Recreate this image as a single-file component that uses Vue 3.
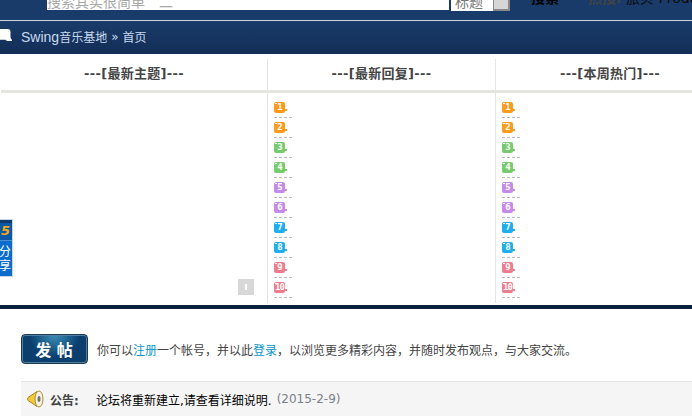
<script setup>
const tints = ['orange', 'orange', 'green', 'green', 'purple', 'purple', 'blue', 'blue', 'red', 'red']
const columns = [
  { title: '最新主题', ranks: [] },
  { title: '最新回复', ranks: tints },
  { title: '本周热门', ranks: tints }
]
</script>

<template>
  <div class="page">
    <header class="top">
      <div class="search-input"><span>搜索其实很简单　二</span></div>
      <div class="search-type"><span>标题</span></div>
      <div class="search-btn"></div>
      <div class="search-label"><span>搜索</span></div>
      <div class="hot"><span><b>热搜:</b> 旅贝 Produ</span></div>
    </header>

    <nav class="crumb">
      <svg class="crumb-icon" width="12" height="13" viewBox="0 0 12 13">
        <path d="M0 0h7.5q3 0 3 3v5q0 1.5 1.5 3v1h-5l-1.5-1.2H0z" fill="#fff" />
      </svg>
      <span class="crumb-latin">Swing</span><span>音乐基地</span>
      <span class="crumb-sep">»</span>
      <span>首页</span>
    </nav>

    <section class="board">
      <div class="panels">
        <div v-for="(col, i) in columns" :key="col.title" class="panel">
          <h3 class="panel-title">---[{{ col.title }}]---</h3>
          <ol class="rank-list">
            <li v-for="(tint, n) in col.ranks" :key="n" class="rank-row">
              <span class="badge" :class="tint">{{ n + 1 }}</span>
            </li>
          </ol>
          <div v-if="i === 0" class="toggle"><i></i></div>
        </div>
      </div>
    </section>

    <div class="divider"></div>

    <div class="post-row">
      <button class="post-btn">发 帖</button>
      <p class="post-hint">你可以<a>注册</a>一个帐号，并以此<a>登录</a>，以浏览更多精彩内容，并随时发布观点，与大家交流。</p>
    </div>

    <div class="notice">
      <svg class="horn" width="17" height="18" viewBox="0 0 17 18">
        <path d="M1 7.5 L10 1.5 L10 16.5 L1 10.5 Q0 9 1 7.5z" fill="#f3c93c" stroke="#a9862a" stroke-width="1" />
        <ellipse cx="12" cy="9" rx="4" ry="8" fill="#f4f1e4" stroke="#b08f35" stroke-width="1" />
        <ellipse cx="12" cy="9" rx="1.5" ry="3" fill="#77746a" />
      </svg>
      <strong class="notice-label">公告:</strong>
      <span class="notice-text">论坛将重新建立,请查看详细说明.</span>
      <span class="notice-date">(2015-2-9)</span>
    </div>

    <aside class="share">
      <div class="share-logo">5</div>
      <div class="share-text">分<br />享</div>
    </aside>
  </div>
</template>

<style>
html, body { margin: 0; overflow: hidden; background: #fff; }
</style>

<style scoped>
.page {
  position: relative;
  width: 692px;
  height: 416px;
  overflow: hidden;
  background: #fff;
  font-family: "DejaVu Sans", "Noto Sans CJK SC", sans-serif;
  font-size: 12px;
  color: #444;
}
.top {
  display: flex;
  align-items: flex-start;
  height: 20px;
  padding-left: 47px;
  box-sizing: border-box;
  background: #193b69;
}
.top > div { flex: none; }
.search-input {
  width: 402px;
  height: 10px;
  background: #fff;
  overflow: hidden;
  color: #a6a6a6;
  font-size: 14px;
  line-height: 16px;
}
.search-input span { display: block; margin-top: -6px; white-space: nowrap; }
.search-type {
  width: 42px;
  height: 11px;
  margin-left: 2px;
  background: #fff;
  overflow: hidden;
  font-size: 14px;
  line-height: 16px;
  color: #777;
}
.search-type span { display: block; margin: -6px 0 0 4px; }
.search-btn {
  width: 14px;
  height: 9px;
  background: #d6d6d6;
  border: 1px solid #8a8a8a;
  border-width: 0 2px 2px 1px;
}
.search-label {
  width: 57px;
  height: 6px;
  margin-left: 21px;
  overflow: hidden;
  color: #000;
  font-size: 14px;
  font-weight: 700;
  line-height: 16px;
}
.search-label span { display: block; margin-top: -10px; }
.hot {
  height: 6px;
  overflow: hidden;
  color: #0b0b0b;
  font-size: 14px;
  line-height: 16px;
  white-space: nowrap;
}
.hot span { display: block; margin-top: -10px; }
.hot b { color: #444; }
.crumb {
  position: relative;
  display: flex;
  align-items: center;
  height: 34px;
  box-sizing: border-box;
  border-top: 1px solid #ccd4de;
  padding: 0 0 2px 21px;
  background: linear-gradient(#1a3b69, #122e57);
  color: #c9d9ee;
  font-size: 12px;
}
.crumb-icon { position: absolute; left: 0; top: 8px; }
.crumb-latin { font-family: "Liberation Sans", sans-serif; font-size: 14px; }
.crumb-sep { margin: 0 4px; font-size: 12px; }
.board { padding-top: 5px; height: 251px; box-sizing: border-box; }
.panels {
  display: grid;
  grid-template-columns: 268px 228px 228px;
  height: 244px;
}
.panel {
  position: relative;
  box-sizing: border-box;
  border-right: 1px solid #e5e5e0;
}
.panel:last-child { border-right: 0; }
.panel:first-child { padding-left: 1px; }
.panel-title {
  height: 31px;
  margin: 0;
  border-bottom: 3px solid #e5e5e0;
  text-align: center;
  font-size: 13px;
  font-weight: 700;
  line-height: 30px;
  color: #444;
  letter-spacing: 0.3px;
}
.rank-list {
  list-style: none;
  margin: 0;
  padding: 5px 0 0 6px;
}
.rank-row {
  width: 18px;
  height: 20px;
  box-sizing: border-box;
  padding-top: 4px;
  border-bottom: 1px dashed #b9b9c2;
}
.badge {
  position: relative;
  display: block;
  width: 11px;
  height: 11px;
  border-radius: 2px;
  color: #fff;
  font-family: "DejaVu Sans Mono", monospace;
  font-size: 9px;
  font-weight: 700;
  line-height: 11px;
  text-align: center;
  letter-spacing: -1px;
}
.badge::before {
  content: "";
  position: absolute;
  left: 1px;
  top: 1px;
  width: 2px;
  height: 1px;
  background: #fff;
}
.badge::after {
  content: "";
  position: absolute;
  left: 11px;
  top: 7px;
  width: 2px;
  height: 2px;
  background: inherit;
}
.orange { background: #ff9b1c; }
.green { background: #77cb6c; }
.purple { background: #c68ae8; }
.blue { background: #20aeee; }
.red { background: #ee7c8c; }
.toggle {
  position: absolute;
  left: 238px;
  top: 220px;
  width: 16px;
  height: 16px;
  display: flex;
  align-items: center;
  justify-content: center;
  background: #d8d8d8;
}
.toggle i { display: block; width: 2px; height: 6px; background: #fff; }
.divider { height: 4px; background: #0b2140; }
.post-row {
  display: flex;
  align-items: center;
  gap: 9px;
  height: 72px;
  padding: 8px 0 0 21px;
  box-sizing: border-box;
}
.post-btn {
  width: 67px;
  height: 30px;
  padding: 0;
  border: 1px solid #1d3a55;
  border-radius: 4px;
  box-shadow: inset 0 0 0 1px #4f7d9d;
  background: radial-gradient(ellipse at 50% 0, #3a8eb6, #0a3f6f 55%, #0d3e69);
  color: #fff;
  font-family: "Noto Sans CJK SC", sans-serif;
  font-size: 16px;
  font-weight: 700;
  letter-spacing: 1px;
}
.post-hint { margin: 0; white-space: nowrap; font-size: 12px; color: #444; }
.post-hint a { color: #0a96c8; }
.notice {
  display: flex;
  align-items: center;
  height: 35px;
  box-sizing: border-box;
  margin-left: 21px;
  padding-left: 6px;
  background: #f5f5f5;
  border-top: 1px solid #e5e5e5;
}
.horn { flex: none; }
.notice-label { margin-left: 6px; width: 46px; font-size: 12px; font-weight: 700; color: #444; }
.notice-text { color: #000; font-size: 12px; white-space: nowrap; }
.notice-date { margin-left: 5px; color: #7a7f8a; font-size: 12px; white-space: nowrap; }
.share {
  position: absolute;
  left: 0;
  top: 219px;
  width: 12px;
  height: 56px;
  box-sizing: content-box;
  background: #0b6ccb;
  border-top: 1px solid #c4d6f2;
  border-right: 1px solid #c4d6f2;
  border-bottom: 1px solid #c4d6f2;
  color: #fff;
  overflow: hidden;
}
.share-logo {
  height: 21px;
  border-top: 3px solid #0d3b66;
  border-bottom: 1px solid #4a90d0;
  box-sizing: border-box;
  background: #0b58a8;
  color: #f7a70f;
  font-family: "DejaVu Sans", sans-serif;
  font-size: 13px;
  font-style: italic;
  font-weight: 700;
  line-height: 15px;
  text-align: right;
  padding-right: 2px;
}
.share-text { font-size: 12px; line-height: 14px; margin: 4px 0 0 -1px; }
</style>
